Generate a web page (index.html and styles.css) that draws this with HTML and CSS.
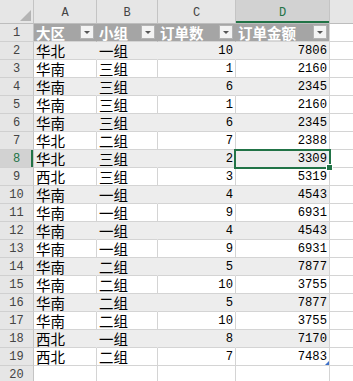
FILE: index.html
```html
<!DOCTYPE html>
<html>
<head>
<meta charset="utf-8">
<link rel="stylesheet" href="styles.css">
</head>
<body>
<div class="sheet">
  <div class="c hd corner"><svg class="tri" width="11" height="11" viewBox="0 0 11 11"><polygon points="11,0 11,11 0,11" fill="#b4b4b4"/></svg></div>
  <div class="c hd">A</div>
  <div class="c hd">B</div>
  <div class="c hd">C</div>
  <div class="c hd active">D</div>
  <div class="c hd"></div>

  <div class="c rn">1</div>
  <div class="c th"><span>大区</span><i class="dd"></i></div>
  <div class="c th"><span>小组</span><i class="dd"></i></div>
  <div class="c th"><span>订单数</span><i class="dd"></i></div>
  <div class="c th last"><span>订单金额</span><i class="dd"></i></div>
  <div class="c"></div>

  <div class="c rn">2</div><div class="c t band">华北</div><div class="c t band">一组</div><div class="c n band">10</div><div class="c n band last">7806</div><div class="c"></div>
  <div class="c rn">3</div><div class="c t">华南</div><div class="c t">三组</div><div class="c n">1</div><div class="c n">2160</div><div class="c"></div>
  <div class="c rn">4</div><div class="c t band">华南</div><div class="c t band">三组</div><div class="c n band">6</div><div class="c n band last">2345</div><div class="c"></div>
  <div class="c rn">5</div><div class="c t">华南</div><div class="c t">三组</div><div class="c n">1</div><div class="c n">2160</div><div class="c"></div>
  <div class="c rn">6</div><div class="c t band">华南</div><div class="c t band">三组</div><div class="c n band">6</div><div class="c n band last">2345</div><div class="c"></div>
  <div class="c rn">7</div><div class="c t">华北</div><div class="c t">二组</div><div class="c n">7</div><div class="c n">2388</div><div class="c"></div>
  <div class="c rn sel-row">8</div><div class="c t band">华北</div><div class="c t band">三组</div><div class="c n band">2</div><div class="c n band last cur">3309<b class="selbox"></b><b class="handle"></b></div><div class="c"></div>
  <div class="c rn">9</div><div class="c t">西北</div><div class="c t">三组</div><div class="c n">3</div><div class="c n">5319</div><div class="c"></div>
  <div class="c rn">10</div><div class="c t band">华南</div><div class="c t band">一组</div><div class="c n band">4</div><div class="c n band last">4543</div><div class="c"></div>
  <div class="c rn">11</div><div class="c t">华南</div><div class="c t">一组</div><div class="c n">9</div><div class="c n">6931</div><div class="c"></div>
  <div class="c rn">12</div><div class="c t band">华南</div><div class="c t band">一组</div><div class="c n band">4</div><div class="c n band last">4543</div><div class="c"></div>
  <div class="c rn">13</div><div class="c t">华南</div><div class="c t">一组</div><div class="c n">9</div><div class="c n">6931</div><div class="c"></div>
  <div class="c rn">14</div><div class="c t band">华南</div><div class="c t band">二组</div><div class="c n band">5</div><div class="c n band last">7877</div><div class="c"></div>
  <div class="c rn">15</div><div class="c t">华南</div><div class="c t">二组</div><div class="c n">10</div><div class="c n">3755</div><div class="c"></div>
  <div class="c rn">16</div><div class="c t band">华南</div><div class="c t band">二组</div><div class="c n band">5</div><div class="c n band last">7877</div><div class="c"></div>
  <div class="c rn">17</div><div class="c t">华南</div><div class="c t">二组</div><div class="c n">10</div><div class="c n">3755</div><div class="c"></div>
  <div class="c rn">18</div><div class="c t band">西北</div><div class="c t band">一组</div><div class="c n band">8</div><div class="c n band last">7170</div><div class="c"></div>
  <div class="c rn">19</div><div class="c t">西北</div><div class="c t">二组</div><div class="c n">7</div><div class="c n end">7483</div><div class="c"></div>
  <div class="c rn">20</div><div class="c"></div><div class="c"></div><div class="c"></div><div class="c"></div><div class="c"></div>
</div>
</body>
</html>
```

FILE: styles.css
```css
html, body {
  margin: 0;
  padding: 0;
  background: #ffffff;
  overflow: hidden;
}
.sheet {
  display: grid;
  grid-template-columns: 34px 63px 61px 78px 94px 40px;
  grid-template-rows: 24px repeat(20, 18px);
  width: 370px;
}
.c {
  box-sizing: border-box;
  border-right: 1px solid #d4d4d4;
  border-bottom: 1px solid #d4d4d4;
  position: relative;
  white-space: nowrap;
}
.hd {
  background: #e6e6e6;
  border-right-color: #c4c4c4;
  border-bottom-color: #bdbdbd;
  font-family: "Liberation Mono", monospace;
  font-size: 12px;
  color: #444444;
  text-align: center;
  line-height: 27px;
}
.corner .tri {
  position: absolute;
  right: 2px;
  bottom: 2px;
}
.hd.active {
  background: #d2d2d2;
  color: #217346;
  box-shadow: inset 0 -2px 0 #217346;
}
.rn {
  background: #e6e6e6;
  border-right-color: #c4c4c4;
  border-bottom-color: #d0d0d0;
  font-family: "Liberation Mono", monospace;
  font-size: 12px;
  color: #444444;
  text-align: center;
  line-height: 18px;
}
.rn.sel-row {
  background: #d2d2d2;
  color: #217346;
  box-shadow: inset -2px 0 0 #217346;
}
.th {
  background: #a5a5a5;
  border-right-color: #a5a5a5;
  color: #ffffff;
  font-family: "Noto Sans CJK SC", sans-serif;
  font-weight: bold;
  font-size: 14.5px;
  line-height: 17px;
  padding-left: 2px;
}
.th.last {
  border-right-color: #d4d4d4;
}
.dd {
  position: absolute;
  right: 2px;
  top: 1px;
  width: 14px;
  height: 14px;
  box-sizing: border-box;
  background: #f3f3f3;
  border: 1px solid #b4b4b4;
}
.dd::after {
  content: "";
  position: absolute;
  left: 3px;
  top: 5px;
  border-left: 3px solid transparent;
  border-right: 3px solid transparent;
  border-top: 3px solid #555555;
}
.t {
  font-family: "Noto Sans CJK SC", sans-serif;
  font-size: 14.5px;
  line-height: 17px;
  color: #000000;
  padding-left: 2px;
}
.n {
  font-family: "Liberation Mono", monospace;
  font-size: 12.2px;
  line-height: 19px;
  color: #000000;
  text-align: right;
  padding-right: 2px;
}
.band {
  background: #ededed;
  border-right-color: #ededed;
}
.band.last {
  border-right-color: #d4d4d4;
}
.selbox {
  position: absolute;
  left: -2px;
  top: -1px;
  right: -2px;
  bottom: -2px;
  border: 2px solid #217346;
  z-index: 2;
}
.handle {
  position: absolute;
  right: -4px;
  bottom: -4px;
  width: 5px;
  height: 5px;
  background: #217346;
  border: 1px solid #ffffff;
  z-index: 3;
}
.end::after {
  content: "";
  position: absolute;
  right: 0;
  bottom: 0;
  border-left: 4px solid transparent;
  border-bottom: 4px solid #3b6fc9;
}
```
